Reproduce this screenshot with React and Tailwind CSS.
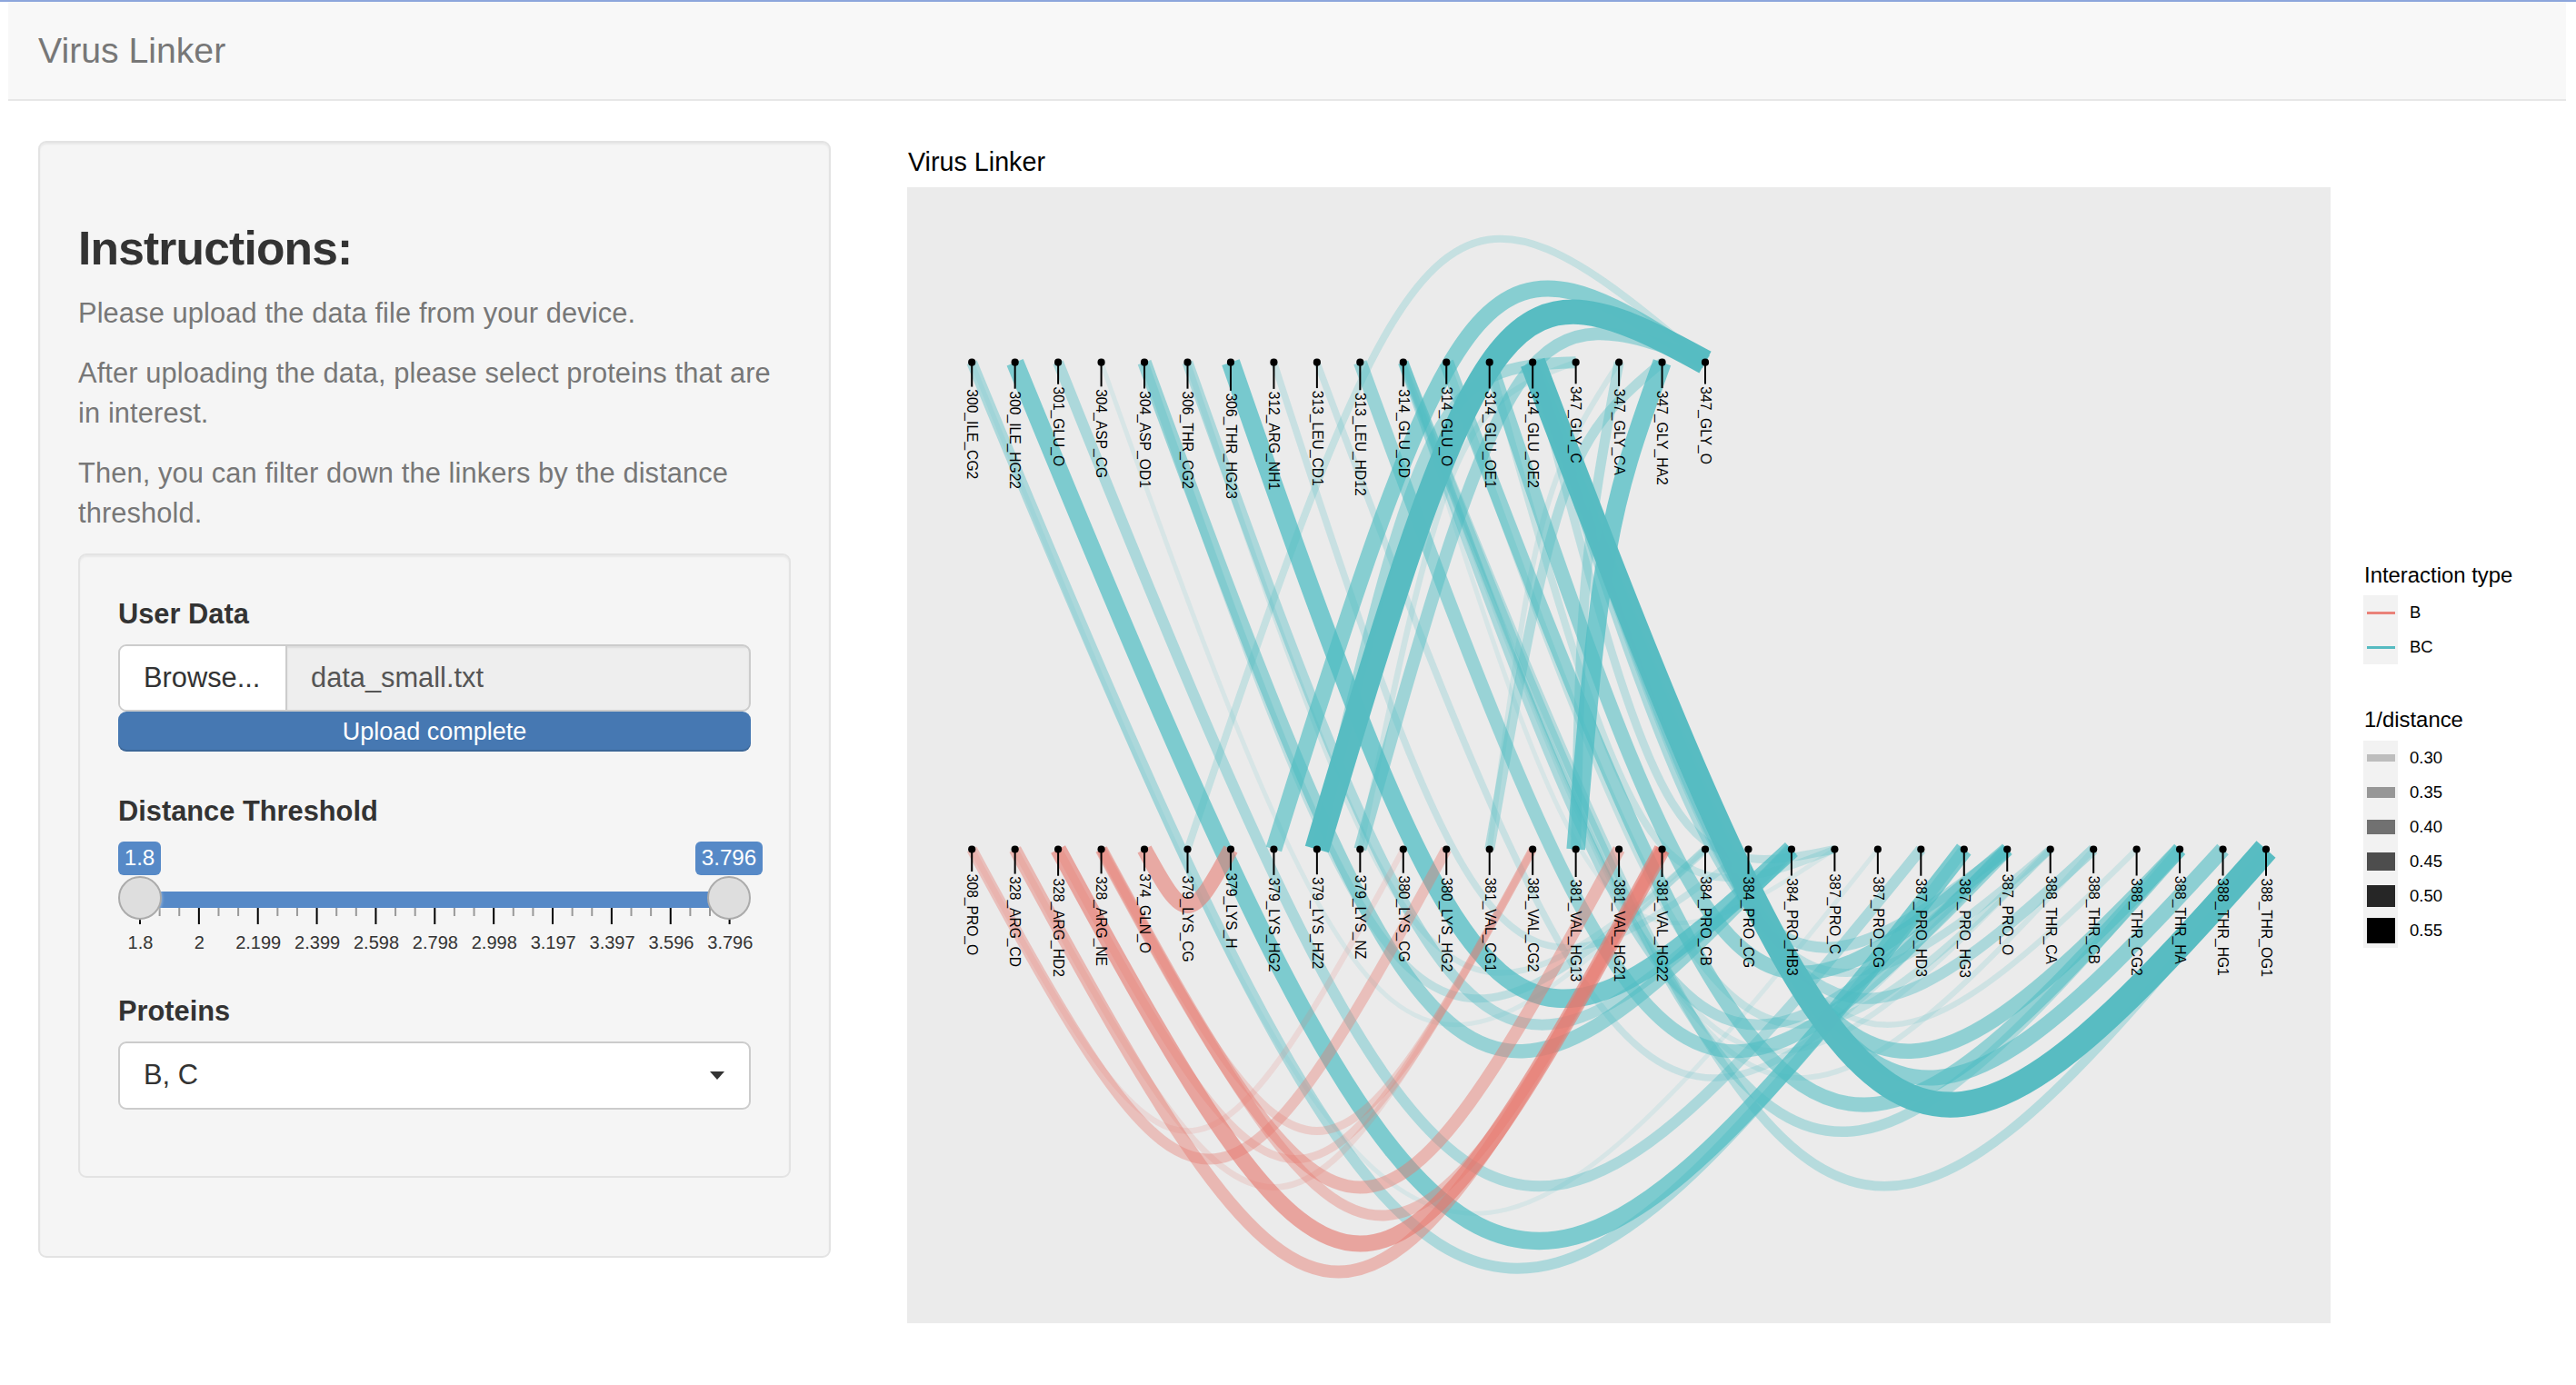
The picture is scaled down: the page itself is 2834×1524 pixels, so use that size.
import React from "react";

const TOP = "300_ILE_CG2 300_ILE_HG22 301_GLU_O 304_ASP_CG 304_ASP_OD1 306_THR_CG2 306_THR_HG23 312_ARG_NH1 313_LEU_CD1 313_LEU_HD12 314_GLU_CD 314_GLU_O 314_GLU_OE1 314_GLU_OE2 347_GLY_C 347_GLY_CA 347_GLY_HA2 347_GLY_O".split(" ");
const BOTTOM = "308_PRO_O 328_ARG_CD 328_ARG_HD2 328_ARG_NE 374_GLN_O 379_LYS_CG 379_LYS_H 379_LYS_HG2 379_LYS_HZ2 379_LYS_NZ 380_LYS_CG 380_LYS_HG2 381_VAL_CG1 381_VAL_CG2 381_VAL_HG13 381_VAL_HG21 381_VAL_HG22 384_PRO_CB 384_PRO_CG 384_PRO_HB3 387_PRO_C 387_PRO_CG 387_PRO_HD3 387_PRO_HG3 387_PRO_O 388_THR_CA 388_THR_CB 388_THR_CG2 388_THR_HA 388_THR_HG1 388_THR_OG1".split(" ");

// Panel-local coordinates
const X0 = 71.2;
const STEP = 47.46;
const TOP_Y = 192.7;
const BOTTOM_Y = 728.5;
const nodeX = (i) => X0 + STEP * i;

// [from, to, width]
const BC_EDGES = [
  [0, 21, 5], [0, 23, 12], [1, 23, 19.5], [2, 22, 12], [3, 17, 5], [4, 17, 9], [4, 19, 15.5],
  [5, 17, 6.5], [5, 19, 12], [6, 19, 20.5], [7, 18, 7.5], [8, 24, 7.5], [9, 24, 15],
  [10, 20, 5], [10, 24, 12], [10, 25, 6], [10, 26, 6], [10, 28, 11.5], [10, 30, 10.5],
  [11, 25, 8.5], [11, 28, 16], [12, 20, 8], [12, 24, 16],
  [13, 20, 9], [13, 24, 12], [13, 25, 9], [13, 26, 12], [13, 27, 6.5], [13, 28, 16.5], [13, 29, 17],
  [14, 9, 6.5], [14, 8, 13], [15, 12, 6], [15, 14, 11], [16, 12, 11], [16, 14, 20.5],
  [17, 5, 8], [17, 9, 14], [17, 7, 18], [17, 8, 27.2], [13, 30, 28],
];
const B_EDGES = [
  [0, 10, 6.5], [0, 11, 12], [1, 13, 7], [1, 16, 14], [2, 13, 9], [2, 16, 18], [3, 13, 9],
  [3, 15, 14], [3, 16, 12], [4, 6, 17],
];

const P = 0.47;
const R = 0.871;
function arc(x1, y1, x2, y2) {
  const dx = x2 - x1;
  const dy = y2 - y1;
  const q = 0.031 * dy;
  const ax = x1 + P * dx - q;
  const ay = y1 + R * dx + P * dy;
  const bx = x2 - P * dx - q;
  const by = y2 + R * dx - P * dy;
  return `M${x1} ${y1}C${ax} ${ay} ${bx} ${by} ${x2} ${y2}`;
}
const alpha = (w) => Math.min(1, 0.22 + 0.039 * (w - 8));

const GLYPH = { _: 0.556, A: 0.667, B: 0.667, C: 0.722, D: 0.722, E: 0.667, G: 0.778, H: 0.722, I: 0.278, L: 0.556, N: 0.722, O: 0.778, P: 0.667, R: 0.722, S: 0.667, T: 0.611, U: 0.722, V: 0.667, Y: 0.667, Z: 0.611 };
const textLen = (s) => 15.5 * [...s].reduce((a, c) => a + (GLYPH[c] ?? 0.556), 0);

function Node({ x, y, label }) {
  const len = textLen(label);
  const start = y + 5.3 + 0.25 * len;
  return (
    <g>
      <line x1={x} x2={x} y1={y} y2={start - 3} stroke="#000" strokeWidth="2" />
      <circle cx={x} cy={y} r="4.1" />
      <text transform={`translate(${x - 5.2} ${start - 0.2}) rotate(90)`} fontSize="15.6">{label}</text>
    </g>
  );
}

function Chart() {
  return (
    <svg width="1566" height="1250" viewBox="0 0 1566 1250" className="block" fontFamily="Liberation Sans, Arial, sans-serif">
      <g fill="none">
        {BC_EDGES.map(([a, b, w]) => (
          <path key={`c${a}-${b}`} d={arc(nodeX(a), TOP_Y, nodeX(b), BOTTOM_Y)} strokeWidth={w} stroke={w > 25 ? "#56bbc1" : "#4cbcc2"} strokeOpacity={w > 25 ? 0.99 : alpha(w) + 0.02} />
        ))}
        {B_EDGES.map(([a, b, w]) => (
          <path key={`b${a}-${b}`} d={arc(nodeX(a), BOTTOM_Y, nodeX(b), BOTTOM_Y)} strokeWidth={w} stroke="#e6786e" strokeOpacity={alpha(w)} />
        ))}
      </g>
      {TOP.map((l, i) => <Node key={l} x={nodeX(i)} y={TOP_Y} label={l} />)}
      {BOTTOM.map((l, i) => <Node key={l} x={nodeX(i)} y={BOTTOM_Y} label={l} />)}
    </svg>
  );
}

const DISTANCES = [
  ["0.30", "h-[8px] bg-[#bdbdbd]"],
  ["0.35", "h-[12px] bg-[#979797]"],
  ["0.40", "h-[16px] bg-[#717171]"],
  ["0.45", "h-[20px] bg-[#4d4d4d]"],
  ["0.50", "h-[24px] bg-[#262626]"],
  ["0.55", "h-[28px] bg-black"],
];

function KeyRow({ bar, label }) {
  return (
    <div className="flex h-[38px] items-center">
      <div className="flex h-[38px] w-[38px] items-center justify-center bg-[#f2f2f2]">
        <div className={`w-[31px] ${bar}`} />
      </div>
      <span className="ml-[13px] text-[18.5px] leading-none">{label}</span>
    </div>
  );
}

function Legend() {
  return (
    <div className="ml-[36px] mt-[507px] flex flex-col text-black">
      <div className="ml-px h-[37px] whitespace-nowrap text-[23.9px] leading-[30px]">Interaction type</div>
      <KeyRow bar="h-[3px] bg-[#ea8279]" label="B" />
      <KeyRow bar="h-[3px] bg-[#56bbc1]" label="BC" />
      <div className="ml-px mt-[46px] h-[38px] whitespace-nowrap text-[23.9px] leading-[30px]">1/distance</div>
      {DISTANCES.map(([label, bar]) => <KeyRow key={label} bar={bar} label={label} />)}
    </div>
  );
}

const TICKS = ["1.8", "2", "2.199", "2.399", "2.598", "2.798", "2.998", "3.197", "3.397", "3.596", "3.796"];

function Slider() {
  return (
    <div className="relative mt-[11px] h-[125px] w-[696px]">
      <div className="absolute left-[24px] top-[55px] h-[18px] w-[649px] bg-[#5689c7]" />
      <svg className="absolute left-0 top-[73px]" width="700" height="20">
        {Array.from({ length: 31 }, (_, i) => {
          const x = 24 + i * 21.62;
          return i % 3 === 0
            ? <line key={i} x1={x} x2={x} y1="0" y2="18" stroke="#000" strokeWidth="2" />
            : <line key={i} x1={x} x2={x} y1="0" y2="9" stroke="#999" strokeWidth="2" />;
        })}
      </svg>
      <div className="absolute left-0 top-0 flex h-[37px] w-[47px] items-center justify-center rounded-[6px] bg-[#5689c7] text-[24.2px] text-white">1.8</div>
      <div className="absolute left-[635px] top-0 flex h-[37px] w-[74px] items-center justify-center rounded-[6px] bg-[#5689c7] text-[24.2px] text-white">3.796</div>
      <div className="absolute left-0 top-[38px] h-[48px] w-[48px] rounded-full border-2 border-[#ababab] bg-[#dedede] shadow-[1px_1px_3px_rgba(255,255,255,0.3)]" />
      <div className="absolute left-[648px] top-[38px] h-[48px] w-[48px] rounded-full border-2 border-[#ababab] bg-[#dedede]" />
      <div className="absolute left-[-8px] top-[99px] flex">
        {TICKS.map((t) => (
          <div key={t} className="w-[64.9px] text-center text-[20px] leading-[25px] text-[#333]">{t}</div>
        ))}
      </div>
    </div>
  );
}

function Sidebar() {
  return (
    <aside className="ml-[42px] mt-[44px] h-[1229px] w-[872px] shrink-0 rounded-[9px] border-2 border-[#e3e3e3] bg-[#f5f5f5] px-[42px] shadow-[inset_0_2px_2px_rgba(0,0,0,0.05)]">
      <h3 className="pt-[87px] text-[51.5px] font-bold leading-[58px] tracking-[-0.8px] text-[#333]">Instructions:</h3>
      <div className="mt-[21px] whitespace-nowrap text-[30.8px] leading-[44px] tracking-[0.12px] text-[#777]">
        <p className="mb-[22px]">Please upload the data file from your device.</p>
        <p className="mb-[22px]">After uploading the data, please select proteins that are<br />in interest.</p>
        <p>Then, you can filter down the linkers by the distance<br />threshold.</p>
      </div>
      <div className="mt-[22px] flex h-[687px] w-[784px] flex-col rounded-[9px] border-2 border-[#e3e3e3] bg-[#f5f5f5] px-[42px] pt-[43px] text-[30.8px] text-[#333] shadow-[inset_0_2px_2px_rgba(0,0,0,0.05)]">
        <div className="h-[55px] text-[30.8px] font-bold leading-[44px]">User Data</div>
        <div className="flex h-[74px] w-[696px] overflow-hidden rounded-[9px] border-2 border-[#ccc] bg-[#eee] leading-[69px]">
          <div className="w-[184px] border-r-2 border-[#ccc] bg-white pl-[26px]">Browse...</div>
          <div className="flex-1 pl-[26px] text-[#555] shadow-[inset_0_2px_2px_rgba(0,0,0,0.075)]">data_small.txt</div>
        </div>
        <div className="h-[44px] w-[696px] rounded-[9px] bg-[#4678b2] text-center text-[27px] leading-[44px] text-white shadow-[inset_0_-2px_0_rgba(0,0,0,0.15)]">Upload complete</div>
        <div className="mt-[44px] text-[30.8px] font-bold leading-[44px]">Distance Threshold</div>
        <Slider />
        <div className="mt-[40px] h-[55px] text-[30.8px] font-bold leading-[44px]">Proteins</div>
        <div className="flex h-[75px] w-[696px] items-center justify-between rounded-[9px] border-2 border-[#ccc] bg-white pl-[26px] pr-[27px]">
          <span>B, C</span>
          <svg width="16" height="9"><path d="M0 0H16L8 9Z" fill="#333" /></svg>
        </div>
      </div>
    </aside>
  );
}

export default function App() {
  return (
    <div className="h-[1524px] w-[2834px] overflow-hidden bg-white font-['Liberation_Sans',Arial,sans-serif]">
      <div className="h-[2px] bg-[#8da6dc]" />
      <nav className="ml-[9px] flex h-[109px] w-[2814px] items-center border-b-2 border-[#e7e7e7] bg-[#f8f8f8] pl-[33px]">
        <span className="text-[39.2px] leading-[44px] text-[#777]">Virus Linker</span>
      </nav>
      <main className="flex items-start">
        <Sidebar />
        <section className="ml-[84px]">
          <div className="h-[95px] pl-px pt-[51px] text-[28.7px] leading-[32px] text-black">Virus Linker</div>
          <div className="h-[1250px] w-[1566px] bg-[#ebebeb]">
            <Chart />
          </div>
        </section>
        <Legend />
      </main>
    </div>
  );
}
